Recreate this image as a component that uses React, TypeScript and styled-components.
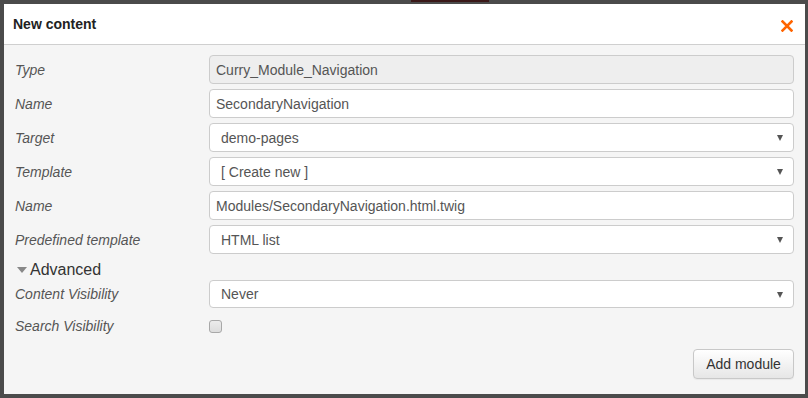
import React from "react";
import styled, { createGlobalStyle } from "styled-components";

const Global = createGlobalStyle`
  html, body { margin: 0; padding: 0; }
  body {
    background: #4b4b4b;
    font-family: "Liberation Sans", Arial, sans-serif;
    width: 808px;
    height: 398px;
    overflow: hidden;
  }
`;

const Backdrop = styled.div`
  position: relative;
  width: 808px;
  height: 398px;
  padding: 4px 3px 4px 4px;
  box-sizing: border-box;
`;

const BehindTab = styled.div`
  position: absolute;
  top: 0;
  left: 411px;
  width: 78px;
  height: 2px;
  background: #3a1818;
`;

const Dialog = styled.div`
  position: relative;
  height: 390px;
  background: #f5f5f5;
  display: flex;
  flex-direction: column;
`;

const Header = styled.div`
  height: 40px;
  background: #fff;
  border-bottom: 1px solid #cfcfcf;
  display: flex;
  align-items: center;
  justify-content: space-between;
  padding: 0 11px 0 9px;
`;

const Title = styled.h3`
  margin: 0;
  font-size: 14px;
  font-weight: bold;
  color: #222;
`;

const Close = styled.button`
  border: 0;
  background: none;
  padding: 0;
  width: 14px;
  height: 14px;
  display: flex;
  align-items: center;
  justify-content: center;
  margin-top: 4px;
  cursor: pointer;
`;

const Body = styled.div`
  flex: 1;
  padding: 10px 11px 0 11px;
  display: flex;
  flex-direction: column;
`;

const Row = styled.div<{ $h?: number; $mb?: number }>`
  display: grid;
  grid-template-columns: 194px 1fr;
  align-items: center;
  height: ${(p) => p.$h ?? 29}px;
  margin-bottom: ${(p) => p.$mb ?? 5}px;
`;

const Label = styled.label`
  font-size: 14px;
  font-style: italic;
  color: #555;
`;

const Field = styled.div<{ $disabled?: boolean; $select?: boolean }>`
  height: 100%;
  box-sizing: border-box;
  border: 1px solid #cccccc;
  border-radius: 4px;
  background: ${(p) => (p.$disabled ? "#eeeeee" : "#ffffff")};
  display: flex;
  align-items: center;
  justify-content: space-between;
  padding: 0 10px 0 ${(p) => (p.$select ? 11 : 6)}px;
  font-size: 14px;
  color: #555;
`;

const Caret = styled.span`
  width: 0;
  height: 0;
  border-left: 3.5px solid transparent;
  border-right: 3.5px solid transparent;
  border-top: 6px solid #555;
  margin-top: 1px;
`;

const Section = styled.div`
  display: flex;
  align-items: center;
  height: 21px;
  margin: 0 0 0 2px;
  font-size: 16px;
  color: #333;
`;

const SectionCaret = styled.span`
  width: 0;
  height: 0;
  border-left: 5px solid transparent;
  border-right: 5px solid transparent;
  border-top: 6px solid #888;
  margin-right: 3px;
  margin-top: 1px;
`;

const Check = styled.span`
  width: 13px;
  height: 13px;
  box-sizing: border-box;
  border: 1px solid #a8a8a8;
  border-radius: 3px;
  background: linear-gradient(#ececec, #dcdcdc);
  display: block;
`;

const Footer = styled.div`
  display: flex;
  justify-content: flex-end;
  margin-top: 11px;
`;

const Button = styled.button`
  height: 30px;
  width: 101px;
  border: 1px solid #c8c8c8;
  border-radius: 4px;
  background: linear-gradient(#ffffff, #e6e6e6);
  font-family: "Liberation Sans", Arial, sans-serif;
  font-size: 14px;
  color: #333;
  box-shadow: inset 0 1px 0 rgba(255, 255, 255, 0.2), 0 1px 1px rgba(0, 0, 0, 0.05);
`;

const fields: { label: string; value: string; disabled?: boolean; select?: boolean }[] = [
  { label: "Type", value: "Curry_Module_Navigation", disabled: true },
  { label: "Name", value: "SecondaryNavigation" },
  { label: "Target", value: "demo-pages", select: true },
  { label: "Template", value: "[ Create new ]", select: true },
  { label: "Name", value: "Modules/SecondaryNavigation.html.twig" },
  { label: "Predefined template", value: "HTML list", select: true },
];

export default function App() {
  return (
    <>
      <Global />
      <Backdrop>
        <BehindTab />
        <Dialog>
          <Header>
            <Title>New content</Title>
            <Close aria-label="Close">
              <svg width="12" height="12" viewBox="0 0 12 12">
                <path d="M1.5 1.5 L10.5 10.5 M10.5 1.5 L1.5 10.5" stroke="#ff6400" strokeWidth="2.6" strokeLinecap="square" />
              </svg>
            </Close>
          </Header>
          <Body>
            {fields.map((f, i) => (
              <Row key={i}>
                <Label>{f.label}</Label>
                <Field $disabled={f.disabled} $select={f.select}>
                  <span>{f.value}</span>
                  {f.select && <Caret />}
                </Field>
              </Row>
            ))}
            <Section>
              <SectionCaret />
              Advanced
            </Section>
            <Row $h={28} $mb={6}>
              <Label>Content Visibility</Label>
              <Field $select>
                <span>Never</span>
                <Caret />
              </Field>
            </Row>
            <Row $h={24} $mb={0}>
              <Label>Search Visibility</Label>
              <Check />
            </Row>
            <Footer>
              <Button>Add module</Button>
            </Footer>
          </Body>
        </Dialog>
      </Backdrop>
    </>
  );
}
